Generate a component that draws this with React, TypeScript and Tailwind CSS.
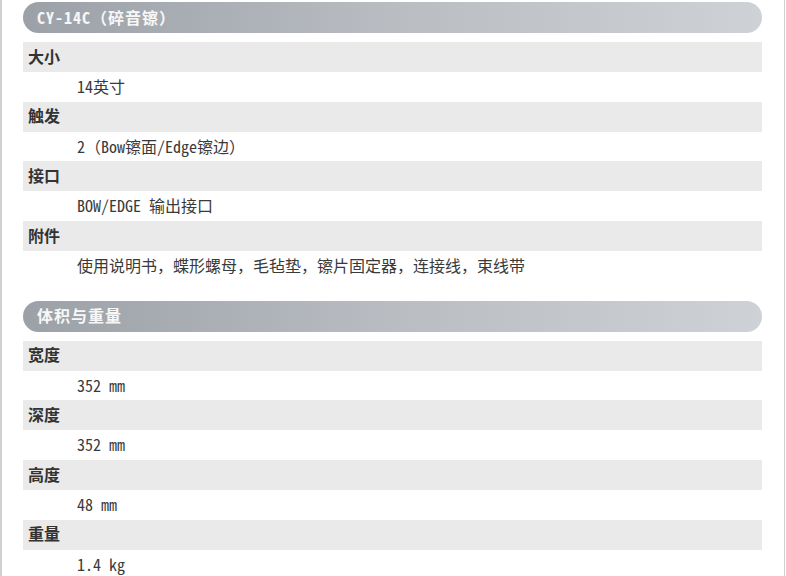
import React from 'react';

type Row = { label: string; value: string };

const sections: { title: string; rows: Row[] }[] = [
  {
    title: 'CY-14C（碎音镲）',
    rows: [
      { label: '大小', value: '14英寸' },
      { label: '触发', value: '2（Bow镲面/Edge镲边）' },
      { label: '接口', value: 'BOW/EDGE 输出接口' },
      { label: '附件', value: '使用说明书，蝶形螺母，毛毡垫，镲片固定器，连接线，束线带' },
    ],
  },
  {
    title: '体积与重量',
    rows: [
      { label: '宽度', value: '352 mm' },
      { label: '深度', value: '352 mm' },
      { label: '高度', value: '48 mm' },
      { label: '重量', value: '1.4 kg' },
    ],
  },
];

const font = { fontFamily: '"Noto Sans Mono CJK SC", "Liberation Mono", "Noto Sans CJK SC", monospace' };

export default function App() {
  return (
    <main className="w-[785px] h-[576px] overflow-hidden bg-white border-l-2 border-r border-[#d0d0d0]" style={font}>
      <div className="pl-[21px] pr-[22px] pt-[2px] flex flex-col gap-[20px]">
        {sections.map((s) => (
          <section key={s.title}>
            {/* section title bar */}
            <div className="h-[31px] rounded-full bg-gradient-to-r from-[#9ca1a8] via-[#b9bdc2] to-[#ced1d5] flex items-center pl-[14px] pb-[2px] mb-[9px]">
              <h2 className="text-[16px] font-bold text-[#f7f7f7] leading-none tracking-[1px]">{s.title}</h2>
            </div>
            {s.rows.map((r) => (
              <div key={r.label}>
                <div className="h-[30px] bg-[#eaeaea] flex items-center pl-[5px] pb-[3px]">
                  <span className="text-[16px] font-bold text-[#333] leading-none">{r.label}</span>
                </div>
                <div className="h-[29.7px] flex items-center pl-[54px] pb-[2px]">
                  <span className="text-[16px] text-[#3a3a3a] leading-none">{r.value}</span>
                </div>
              </div>
            ))}
          </section>
        ))}
      </div>
    </main>
  );
}
